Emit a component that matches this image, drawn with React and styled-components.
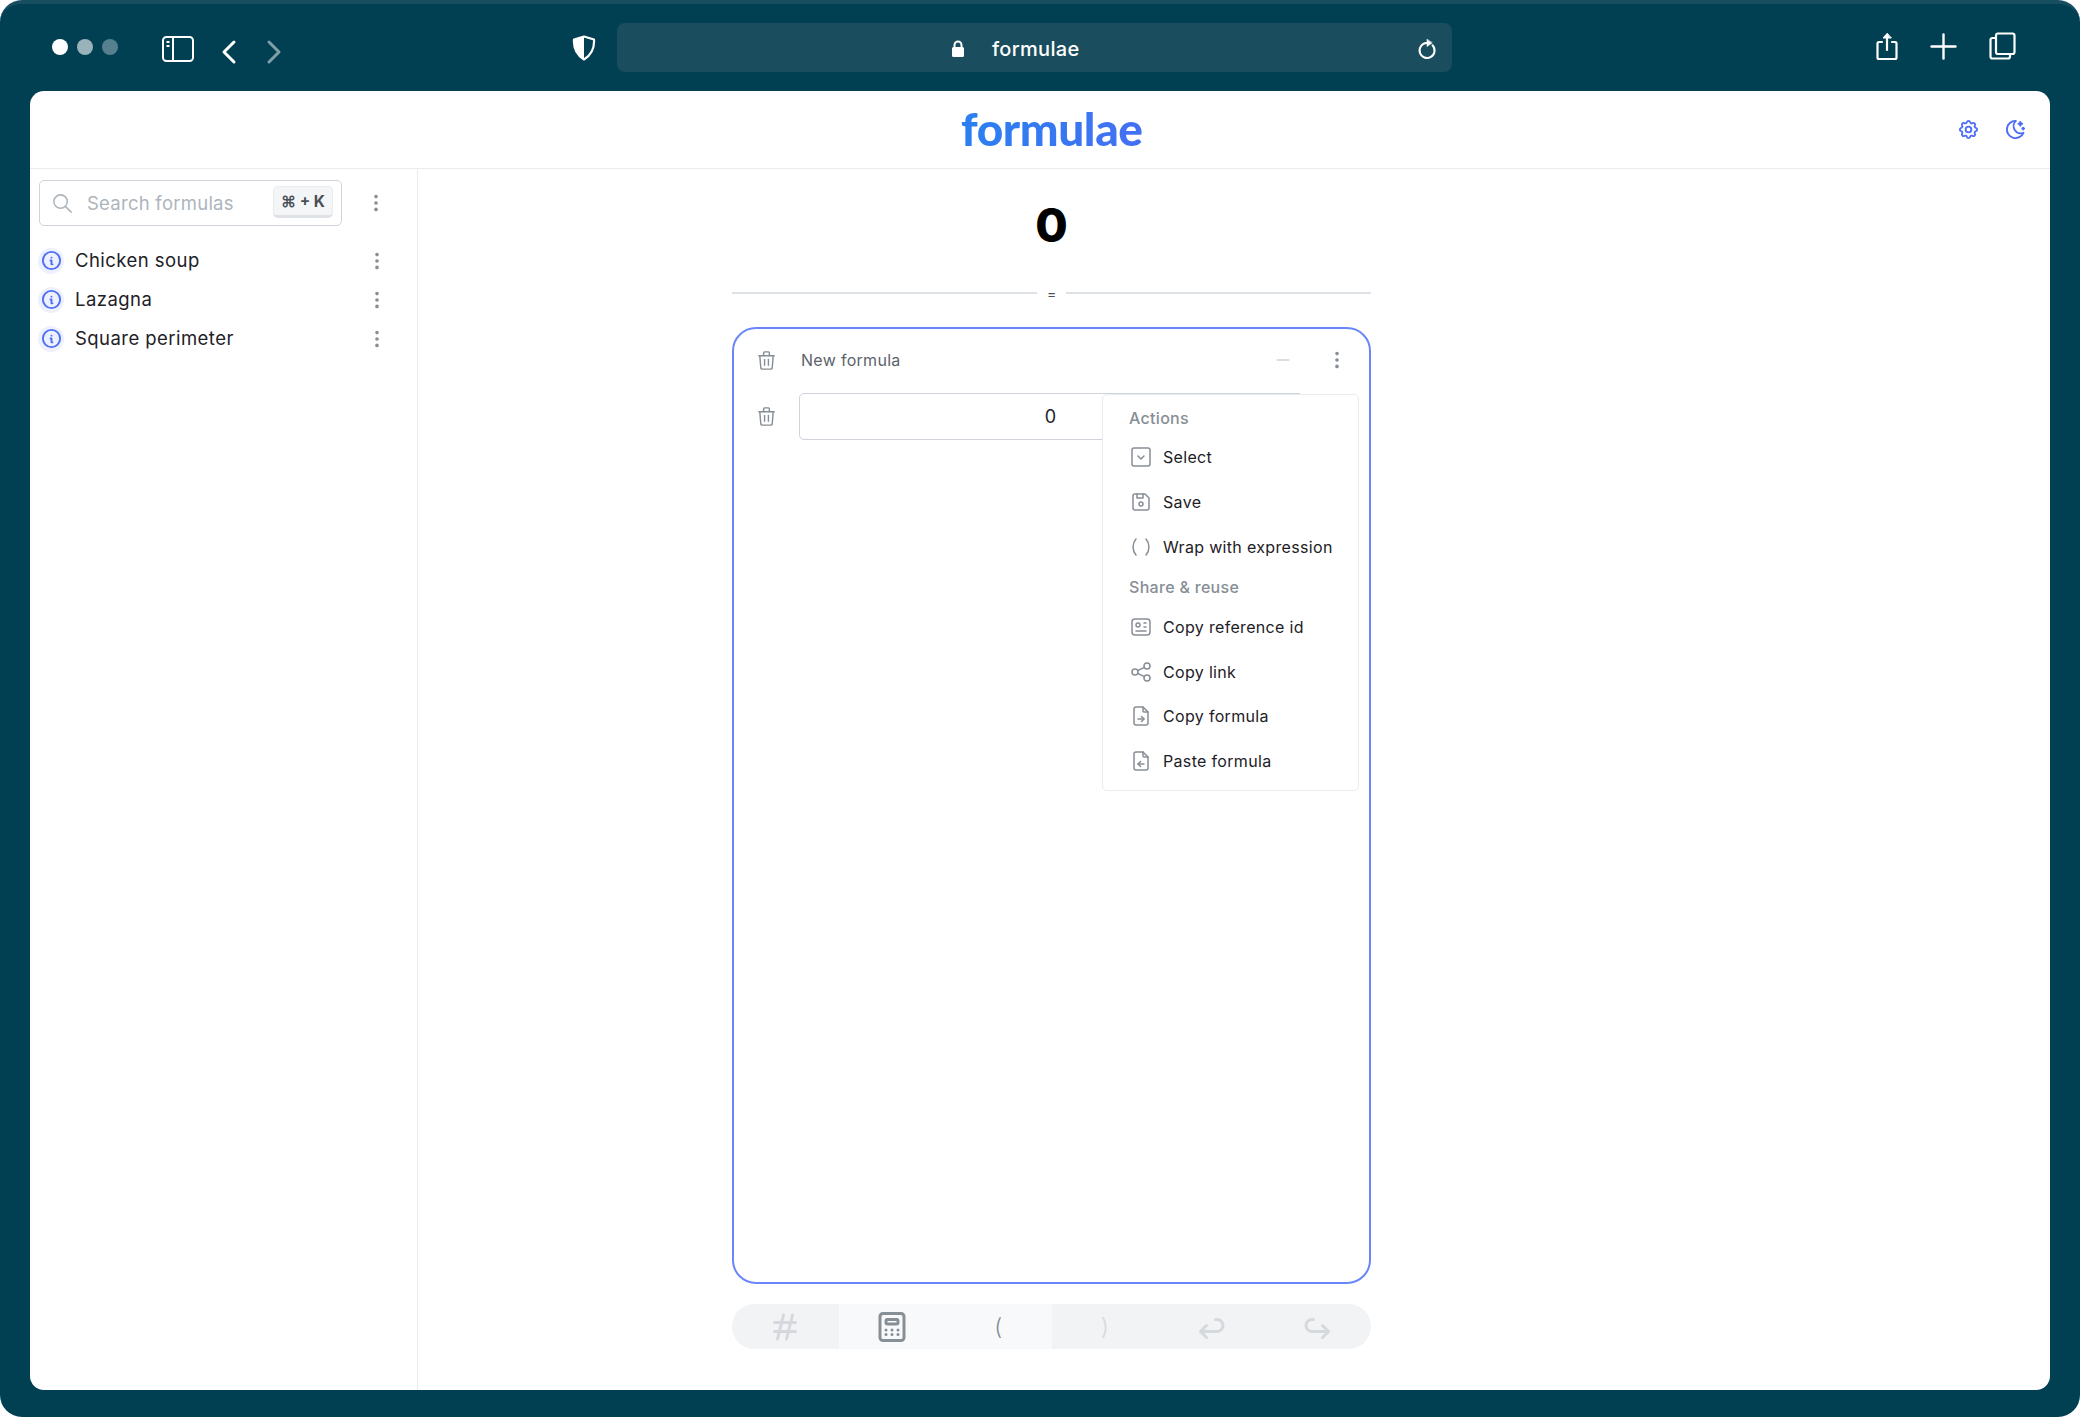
import React from "react";
import styled, { createGlobalStyle } from "styled-components";
import {
  TbSearch,
  TbDotsVertical,
  TbInfoCircle,
  TbSettings,
  TbMoonStars,
  TbTrash,
  TbMinus,
  TbSquareChevronDown,
  TbDeviceFloppy,
  TbParentheses,
  TbId,
  TbShare,
  TbFileArrowRight,
  TbFileArrowLeft,
  TbHash,
  TbCalculator,
  TbArrowBack,
  TbArrowForward,
  TbPlus,
  TbChevronLeft,
  TbChevronRight,
} from "react-icons/tb";

const GlobalStyle = createGlobalStyle`
  html, body {
    margin: 0;
    padding: 0;
    background: #fff;
  }
  body {
    font-family: Inter, "Open Sans", sans-serif;
    color: #1d2126;
  }
`;

const Frame = styled.div`
  width: 2080px;
  height: 1417px;
  box-sizing: border-box;
  display: flex;
  flex-direction: column;
  background: #004052;
  border-radius: 22px;
  border-top: 4px solid #174e60;
  overflow: hidden;
`;

const BrowserBar = styled.header`
  height: 87px;
  flex: none;
  display: flex;
  align-items: center;
  padding: 0 64px 0 52px;
  color: #fff;
`;

const Dots = styled.div`
  display: flex;
  gap: 9px;
  margin-top: -1px;
  margin-right: 44px;
`;

const Dot = styled.span`
  width: 16px;
  height: 16px;
  border-radius: 50%;
  background: ${(p) => p.$color};
`;

const BarIcon = styled.span`
  display: flex;
  color: ${(p) => (p.$dim ? "#7f9fa9" : "#fff")};
  margin: ${(p) => p.$margin || 0};
`;

const UrlBar = styled.div`
  width: 835px;
  height: 49px;
  flex: none;
  margin-left: 21px;
  display: flex;
  align-items: center;
  padding: 3px 15px 0 334px;
  box-sizing: border-box;
  border-radius: 8px;
  background: #1a4d5d;
`;

const UrlText = styled.span`
  font-size: 20px;
  font-weight: 500;
  letter-spacing: 0.3px;
  margin-left: 27px;
  margin-right: auto;
`;

const BarActions = styled.div`
  display: flex;
  align-items: center;
  margin-left: auto;
  margin-top: -3px;
  gap: 25px;
`;

const Panel = styled.div`
  flex: 1;
  display: flex;
  flex-direction: column;
  margin: 0 30px 27px;
  background: #fff;
  border-radius: 14px;
  overflow: hidden;
`;

const AppHeader = styled.div`
  height: 78px;
  flex: none;
  display: flex;
  align-items: center;
  box-sizing: border-box;
  border-bottom: 1.5px solid #e9ebef;
  padding-right: 23px;
`;

const Logo = styled.div`
  margin-left: 931px;
  margin-top: -2px;
  font-family: Lato, Inter, sans-serif;
  font-size: 46px;
  font-weight: 900;
  line-height: 1;
  letter-spacing: -0.4px;
  background: linear-gradient(90deg, #2a80f0, #4470f3);
  -webkit-background-clip: text;
  background-clip: text;
  color: transparent;
`;

const HeaderIcons = styled.div`
  display: flex;
  gap: 24px;
  margin-left: auto;
  color: #4f6ef7;
`;

const Body = styled.div`
  flex: 1;
  display: flex;
  min-height: 0;
`;

const Sidebar = styled.aside`
  width: 388px;
  flex: none;
  box-sizing: border-box;
  border-right: 1.5px solid #e9ebef;
  padding: 11px 0 0 9px;
`;

const SearchRow = styled.div`
  display: flex;
  align-items: center;
  margin-bottom: 15px;
`;

const SearchBox = styled.div`
  width: 303px;
  height: 46px;
  box-sizing: border-box;
  display: flex;
  align-items: center;
  border: 1.5px solid #ced4da;
  border-radius: 5px;
  padding: 0 8px 0 11px;
  color: #adb5bd;
`;

const SearchText = styled.span`
  margin-left: 13px;
  margin-right: auto;
  font-size: 18.5px;
  letter-spacing: 0.25px;
  color: #adb5bd;
`;

const Kbd = styled.span`
  display: flex;
  align-items: center;
  justify-content: center;
  width: 58px;
  height: 28px;
  margin-top: -2px;
  border-radius: 5px;
  background: #f4f5f7;
  border: 1px solid #e9ecef;
  border-bottom: 3px solid #dee2e6;
  font-size: 15.5px;
  font-weight: 700;
  color: #495057;
  white-space: nowrap;
`;

const Kebab = styled.span`
  display: flex;
  color: #868e96;
  margin-left: ${(p) => p.$left || 0};
  margin-right: ${(p) => p.$right || 0};
`;

const FormulaRow = styled.div`
  height: 39px;
  display: flex;
  align-items: center;
`;

const InfoBadge = styled.span`
  width: 26px;
  height: 26px;
  flex: none;
  margin-left: -1px;
  display: flex;
  align-items: center;
  justify-content: center;
  border-radius: 50%;
  background: #edf0fe;
  color: #4f6ef7;
`;

const FormulaName = styled.span`
  flex: 1;
  margin-left: 11px;
  margin-top: -1px;
  font-size: 18.5px;
  letter-spacing: 0.45px;
  color: #1d2126;
`;

const Main = styled.main`
  flex: 1;
  padding-left: 314px;
`;

const Column = styled.div`
  width: 639px;
  display: flex;
  flex-direction: column;
`;

const Result = styled.div`
  height: 74px;
  margin-top: 18px;
  display: flex;
  align-items: center;
  justify-content: center;
  font-size: 47px;
  font-weight: 800;
  color: #000;
`;

const Divider = styled.div`
  display: flex;
  align-items: center;
  gap: 10px;
  height: 20px;
  margin-top: 22px;
  margin-bottom: 24px;
  font-size: 14px;
  color: #495057;
  &::before,
  &::after {
    content: "";
    flex: 1;
    height: 2px;
    background: #dee2e6;
  }
`;

const Card = styled.section`
  position: relative;
  height: 957px;
  box-sizing: border-box;
  border: 2px solid #6a87f9;
  border-radius: 24px;
  padding: 0 0 0 20.5px;
`;

const CardHead = styled.div`
  height: 62px;
  margin-bottom: 2px;
  display: flex;
  align-items: center;
`;

const TrashIcon = styled(TbTrash)`
  flex: none;
  color: #868e96;
`;

const CardTitle = styled.span`
  margin-left: 23.5px;
  font-size: 16px;
  letter-spacing: 0.3px;
  color: #5c636a;
`;

const Minus = styled.span`
  display: flex;
  margin-left: auto;
  color: #ced4da;
`;

const InputRow = styled.div`
  display: flex;
  align-items: center;
`;

const ValueInput = styled.div`
  width: 504px;
  height: 47px;
  margin-left: 21px;
  box-sizing: border-box;
  display: flex;
  align-items: center;
  justify-content: center;
  border: 1.5px solid #ced4da;
  border-radius: 5px;
  font-size: 18px;
  color: #1d2126;
`;

const Menu = styled.div`
  position: absolute;
  top: 65px;
  right: 10px;
  width: 257px;
  height: 397px;
  box-sizing: border-box;
  background: #fff;
  border: 1px solid #e9ecef;
  border-radius: 5px;
  padding: 0 10px 0 26px;
`;

const MenuLabel = styled.div`
  box-sizing: border-box;
  height: ${(p) => p.$height}px;
  padding-top: ${(p) => p.$top || 0}px;
  display: flex;
  align-items: center;
  font-size: 16px;
  font-weight: 500;
  letter-spacing: 0.3px;
  color: #868e96;
`;

const MenuItem = styled.div`
  height: 44.8px;
  display: flex;
  align-items: center;
  font-size: 16px;
  letter-spacing: 0.33px;
  color: #1d2126;
  white-space: nowrap;
`;

const MenuIcon = styled.span`
  width: 24px;
  display: flex;
  justify-content: center;
  margin-right: 10px;
  color: #868e96;
`;

const KeyBar = styled.div`
  height: 45px;
  margin-top: 20px;
  display: grid;
  grid-template-columns: repeat(6, 1fr);
  border-radius: 23px;
  overflow: hidden;
  background: #f1f3f5;
`;

const KeyCell = styled.div`
  display: flex;
  align-items: center;
  justify-content: center;
  background: ${(p) => (p.$active ? "#f8f9fa" : "transparent")};
  color: ${(p) => (p.$dark ? "#868e96" : "#d5d9de")};
  font-size: 23px;
  font-weight: 300;
`;

function SidebarIcon() {
  return (
    <svg width="32" height="26" viewBox="0 0 32 26" fill="none" stroke="currentColor" strokeWidth="2">
      <rect x="1" y="1" width="30" height="24" rx="3.5" />
      <path d="M11 1v24" />
      <path d="M4.5 6h3M4.5 10h3" strokeWidth="2.2" />
    </svg>
  );
}

function ShieldIcon() {
  return (
    <svg width="24" height="26" viewBox="0 0 24 26" fill="none">
      <path d="M12 1.5 22 4.5c.6 8.5-2.5 15.5-10 20-7.5-4.5-10.6-11.5-10-20z" stroke="#fff" strokeWidth="2.2" strokeLinejoin="round" />
      <path d="M12 1.5 2 4.5c-.6 8.5 2.5 15.5 10 20z" fill="#fff" />
    </svg>
  );
}

function LockIcon() {
  return (
    <svg width="14" height="18" viewBox="0 0 14 18" fill="none">
      <path d="M3.5 8V5a3.5 3.5 0 0 1 7 0v3" stroke="#fff" strokeWidth="2" />
      <rect x="1" y="7" width="12" height="10" rx="1.5" fill="#fff" />
    </svg>
  );
}

function ReloadIcon() {
  return (
    <svg width="20" height="22" viewBox="0 0 20 22" fill="none" stroke="#fff" strokeWidth="2" strokeLinecap="round">
      <path d="M9.5 5A7.5 7.5 0 1 0 15.5 7.3" />
      <path d="M10 1.5v7l5-3.5z" fill="#fff" strokeWidth="0.6" strokeLinejoin="round" />
    </svg>
  );
}

function ShareIcon() {
  return (
    <svg width="22" height="29" viewBox="0 0 22 29" fill="none" stroke="#fff" strokeWidth="2.2" strokeLinecap="round" strokeLinejoin="round">
      <path d="M6 10H3a1.5 1.5 0 0 0-1.5 1.5v14A1.5 1.5 0 0 0 3 27h16a1.5 1.5 0 0 0 1.5-1.5v-14A1.5 1.5 0 0 0 19 10h-3" />
      <path d="M11 18V3" />
      <path d="M11 1.5 7 6h8z" fill="#fff" strokeWidth="1" />
    </svg>
  );
}

function TabsIcon() {
  return (
    <svg width="27" height="28" viewBox="0 0 27 28" fill="none" stroke="#fff" strokeWidth="2.2" strokeLinejoin="round">
      <rect x="7" y="1.5" width="18.5" height="20.5" rx="2" />
      <path d="M7 6H3.5a2 2 0 0 0-2 2v16.5a2 2 0 0 0 2 2H19a2 2 0 0 0 2-2V22" />
    </svg>
  );
}

const formulas = ["Chicken soup", "Lazagna", "Square perimeter"];

const actionItems = [
  { icon: TbSquareChevronDown, label: "Select" },
  { icon: TbDeviceFloppy, label: "Save" },
  { icon: TbParentheses, label: "Wrap with expression" },
];

const shareItems = [
  { icon: TbId, label: "Copy reference id" },
  { icon: TbShare, label: "Copy link" },
  { icon: TbFileArrowRight, label: "Copy formula" },
  { icon: TbFileArrowLeft, label: "Paste formula" },
];

function MenuEntries({ items }) {
  return items.map(({ icon: Icon, label }) => (
    <MenuItem key={label}>
      <MenuIcon>
        <Icon size={24} strokeWidth={1.5} />
      </MenuIcon>
      {label}
    </MenuItem>
  ));
}

export default function App() {
  return (
    <>
      <GlobalStyle />
      <Frame>
        <BrowserBar>
          <Dots>
            <Dot $color="#fff" />
            <Dot $color="#9ab3ba" />
            <Dot $color="#56808d" />
          </Dots>
          <BarIcon $margin="2px 0 0 0">
            <SidebarIcon />
          </BarIcon>
          <BarIcon $margin="9px 0 0 14.5px">
            <TbChevronLeft size={40} strokeWidth={1.8} />
          </BarIcon>
          <BarIcon $dim $margin="9px 0 0 5px">
            <TbChevronRight size={40} strokeWidth={1.8} />
          </BarIcon>
          <BarIcon $margin="1px 0 0 278.5px">
            <ShieldIcon />
          </BarIcon>
          <UrlBar>
            <LockIcon />
            <UrlText>formulae</UrlText>
            <ReloadIcon />
          </UrlBar>
          <BarActions>
            <ShareIcon />
            <TbPlus size={41} strokeWidth={1.4} />
            <TabsIcon />
          </BarActions>
        </BrowserBar>
        <Panel>
          <AppHeader>
            <Logo>formulae</Logo>
            <HeaderIcons>
              <TbSettings size={23} />
              <TbMoonStars size={23} />
            </HeaderIcons>
          </AppHeader>
          <Body>
            <Sidebar>
              <SearchRow>
                <SearchBox>
                  <TbSearch size={23} strokeWidth={1.6} />
                  <SearchText>Search formulas</SearchText>
                  <Kbd>⌘ + K</Kbd>
                </SearchBox>
                <Kebab $left="23px">
                  <TbDotsVertical size={22} />
                </Kebab>
              </SearchRow>
              {formulas.map((name) => (
                <FormulaRow key={name}>
                  <InfoBadge>
                    <TbInfoCircle size={23} />
                  </InfoBadge>
                  <FormulaName>{name}</FormulaName>
                  <Kebab $right="29.5px">
                    <TbDotsVertical size={22} />
                  </Kebab>
                </FormulaRow>
              ))}
            </Sidebar>
            <Main>
              <Column>
                <Result>0</Result>
                <Divider>=</Divider>
                <Card>
                  <CardHead>
                    <TrashIcon size={23} strokeWidth={1.5} />
                    <CardTitle>New formula</CardTitle>
                    <Minus>
                      <TbMinus size={20} />
                    </Minus>
                    <Kebab $left="33px" $right="21px">
                      <TbDotsVertical size={22} />
                    </Kebab>
                  </CardHead>
                  <InputRow>
                    <TrashIcon size={23} strokeWidth={1.5} />
                    <ValueInput>0</ValueInput>
                  </InputRow>
                  <Menu>
                    <MenuLabel $height={40} $top={6}>Actions</MenuLabel>
                    <MenuEntries items={actionItems} />
                    <MenuLabel $height={35}>Share &amp; reuse</MenuLabel>
                    <MenuEntries items={shareItems} />
                  </Menu>
                </Card>
                <KeyBar>
                  <KeyCell>
                    <TbHash size={36} strokeWidth={2} />
                  </KeyCell>
                  <KeyCell $active $dark>
                    <TbCalculator size={36} strokeWidth={2} />
                  </KeyCell>
                  <KeyCell $active $dark>(</KeyCell>
                  <KeyCell>)</KeyCell>
                  <KeyCell>
                    <TbArrowBack size={36} strokeWidth={2} />
                  </KeyCell>
                  <KeyCell>
                    <TbArrowForward size={36} strokeWidth={2} />
                  </KeyCell>
                </KeyBar>
              </Column>
            </Main>
          </Body>
        </Panel>
      </Frame>
    </>
  );
}
